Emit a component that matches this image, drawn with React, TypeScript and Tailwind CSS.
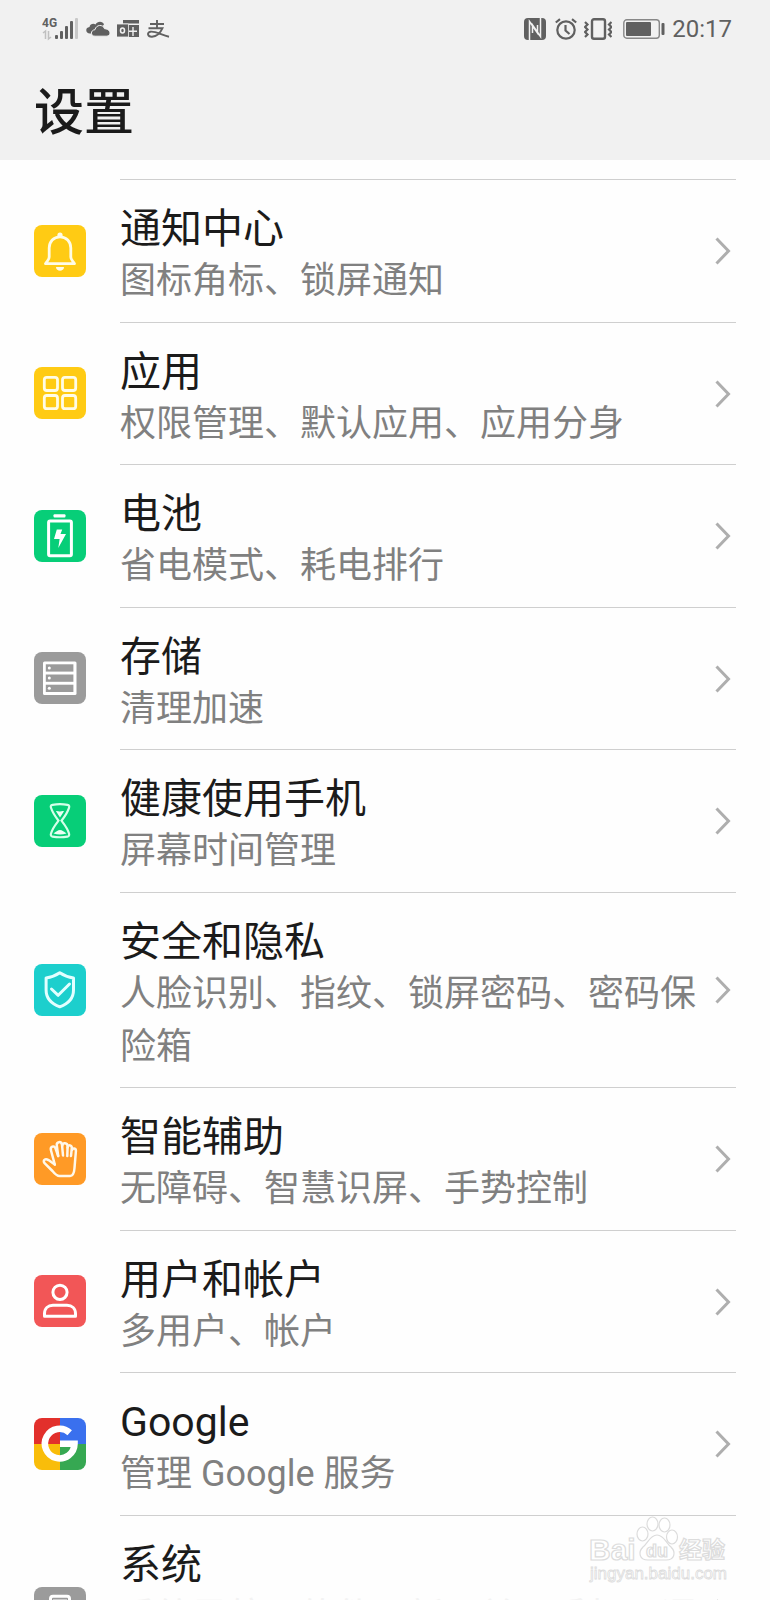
import type { ReactNode } from "react";

interface SettingItem {
  title: string;
  summary: string;
  color: string;
  icon: ReactNode;
  faded?: boolean;
}

const items: SettingItem[] = [
  { title: "通知中心", summary: "图标角标、锁屏通知", color: "bg-[#ffcb14]", icon: <BellIcon /> },
  { title: "应用", summary: "权限管理、默认应用、应用分身", color: "bg-[#ffcb14]", icon: <AppsIcon /> },
  { title: "电池", summary: "省电模式、耗电排行", color: "bg-[#07ce78]", icon: <BatteryIcon /> },
  { title: "存储", summary: "清理加速", color: "bg-[#9b9b9b]", icon: <StorageIcon /> },
  { title: "健康使用手机", summary: "屏幕时间管理", color: "bg-[#07ce78]", icon: <HourglassIcon /> },
  { title: "安全和隐私", summary: "人脸识别、指纹、锁屏密码、密码保险箱", color: "bg-[#1ccfcd]", icon: <ShieldIcon /> },
  { title: "智能辅助", summary: "无障碍、智慧识屏、手势控制", color: "bg-[#ff9a26]", icon: <HandIcon /> },
  { title: "用户和帐户", summary: "多用户、帐户", color: "bg-[#f25657]", icon: <UserIcon /> },
  { title: "Google", summary: "管理 Google 服务", color: "bg-white", icon: <GoogleIcon /> },
  { title: "系统", summary: "系统导航、软件更新、关于手机、语言和输入法", color: "bg-[#9b9b9b]", icon: <PhoneIcon />, faded: true },
];

function BellIcon() {
  return (
    <svg viewBox="0 0 52 52" fill="none" stroke="#fffce6" strokeWidth="2.8" strokeLinejoin="round">
      <path d="M26 11.8c-6.3 0-10.8 4.7-10.8 11.2v9c0 3-2 3.7-3.7 6.7h29c-1.7-3-3.7-3.7-3.7-6.7v-9c0-6.5-4.5-11.2-10.8-11.2z" />
      <circle cx="26" cy="10" r="2.6" fill="#fffce6" stroke="none" />
      <path d="M22 42h8c0 5-8 5-8 0z" fill="#fffce6" stroke="none" />
    </svg>
  );
}

function AppsIcon() {
  return (
    <svg viewBox="0 0 52 52" fill="none" stroke="#fffce6" strokeWidth="2.8">
      <rect x="10.3" y="10.3" width="13.2" height="13.2" rx="2.5" />
      <rect x="28.5" y="10.3" width="13.2" height="13.2" rx="2.5" />
      <rect x="10.3" y="28.5" width="13.2" height="13.2" rx="2.5" />
      <rect x="28.5" y="28.5" width="13.2" height="13.2" rx="2.5" />
    </svg>
  );
}

function BatteryIcon() {
  return (
    <svg viewBox="0 0 52 52" fill="none">
      <rect x="19.5" y="4.2" width="12" height="3.2" rx="1" fill="#fff" />
      <rect x="14.6" y="11" width="22.8" height="34.8" rx="1.5" stroke="#fff" strokeWidth="3" />
      <path d="M22.8 19.5h5.4L26.5 24H32l-7.7 14 1.3-9H20z" fill="#fff" />
    </svg>
  );
}

function StorageIcon() {
  return (
    <svg viewBox="0 0 52 52">
      <rect x="9" y="9.5" width="33.5" height="33.5" rx="1.5" fill="#fff" />
      {[12.3, 22.5, 32.7].map((y) => (
        <g key={y}>
          <rect x="11.8" y={y} width="27.6" height="7.3" fill="#9b9b9b" />
          <circle cx="15.3" cy={y + 3.6} r="1.5" fill="#fff" />
        </g>
      ))}
    </svg>
  );
}

function HourglassIcon() {
  return (
    <svg viewBox="0 0 52 52" fill="none">
      <path
        d="M18.5 9.8c5-.8 10-.8 15 0 1.8.3 2 1.4 1.5 3-1.7 5.5-4.5 9-7.5 12.9 3 3.9 6 7.5 7.5 12.8.5 1.8 0 2.8-1.5 3.1-5 .9-10 .9-15 0-1.5-.3-2-1.3-1.5-3.1 1.5-5.3 4.5-8.9 7.5-12.8-3-3.9-5.8-7.4-7.5-12.9-.5-1.600-.3-2.700 1.500-3z"
        stroke="#d4ffe9"
        strokeWidth="2.2"
      />
      <path d="M22 16.2c1.5-.5 2.5.6 4 .3s2.500-.8 4-.3l-4 6.3zM19.5 38.5c2-1.5 4.5-3.5 6.5-3.5s4.5 2 6.5 3.5c-4 1.2-9 1.2-13 0z" fill="#eafff4" />
    </svg>
  );
}

function ShieldIcon() {
  return (
    <svg viewBox="0 0 52 52" fill="none" stroke="#e2ffff" strokeWidth="3" strokeLinecap="round" strokeLinejoin="round">
      <path d="M25.8 8.8c-4 2.7-8.8 4.5-13.7 5.2v12c0 8.5 5.4 13.8 13.7 16.8 8.3-3 13.7-8.3 13.7-16.8V14c-4.9-.7-9.7-2.5-13.7-5.2z" />
      <path d="M17.5 25l6.7 6.3L35.5 20" />
    </svg>
  );
}

function HandIcon() {
  return (
    <svg viewBox="0 0 52 52" fill="none" stroke="#fff8ea" strokeWidth="2.5" strokeLinecap="round" strokeLinejoin="round">
      <path d="M20.8 31.5L17 17.5c-1.2-4.2 3.3-5.6 4.5-2.2L24.2 23" />
      <path d="M24.2 23l-1.4-10.5c-.5-4 4.6-4.7 5.2-.7L29 22.5" />
      <path d="M28.2 12.8c.5-3.7 5.4-3.2 5.4.5L33.3 23" />
      <path d="M33.6 14.5c1-3.3 4.2-2.5 4.2.5L37 23M37.9 17.5c.7-3 4.3-2.3 4 .7L40.5 35c-.3 4.5-1.5 8-4.5 8H25.5c-3 0-5-2.5-7-5l-7.7-7.7c-2.6-2.7.3-5.3 3.7-3.2l6.3 4.4" />
    </svg>
  );
}

function UserIcon() {
  return (
    <svg viewBox="0 0 52 52" fill="none" stroke="#fff" strokeWidth="3" strokeLinejoin="round">
      <circle cx="26" cy="17.3" r="7.1" />
      <path d="M10.5 41.3v-2.5c0-5.5 3.5-8.5 8.5-8.5h14c5 0 8.5 3 8.5 8.5v2.5z" />
    </svg>
  );
}

function GoogleIcon() {
  return (
    <svg viewBox="0 0 52 52" fill="none">
      <path d="M0 0h26v26H0z" fill="#e2302c" />
      <path d="M26 0h26v26H26z" fill="#3a70ee" />
      <path d="M0 26h26v26H0z" fill="#f9bd0a" />
      <path d="M26 26h26v26H26z" fill="#36a852" />
      <path d="M35.7 14.7A14.8 14.8 0 1 0 40.5 25.8H26" stroke="#fff" strokeWidth="6.6" />
    </svg>
  );
}

function PhoneIcon() {
  return (
    <svg viewBox="0 0 52 52" fill="none" stroke="#fff">
      <rect x="16.5" y="9.3" width="19" height="34" rx="2.5" strokeWidth="3" />
      <path d="M19 13h14" strokeWidth="1" />
    </svg>
  );
}

function Chevron() {
  return (
    <svg viewBox="0 0 16 28" fill="none" stroke="#aeaeae" strokeWidth="3" className="h-7 w-4 shrink-0">
      <path d="M1.5 1.500L13.5 14 1.5 26.5" />
    </svg>
  );
}

function StatusBar() {
  return (
    <div className="flex h-[58px] items-center justify-between pl-[42px] pr-[38px] text-[#606060]">
      <div className="flex items-center gap-[7px]">
        <svg viewBox="0 0 37 24" className="h-6 w-[37px]" fill="currentColor">
          <text x="0" y="10" fontSize="12" fontWeight="700" fontFamily="Roboto, sans-serif">
            4G
          </text>
          <path d="M1 16l2.5-2v8M6.5 14v8l2.5-2" fill="none" stroke="#c0c0c0" strokeWidth="1.5" />
          <rect x="13" y="18" width="3" height="4" rx="1" />
          <rect x="18" y="14" width="3" height="8" rx="1" />
          <rect x="23" y="9" width="3" height="13" rx="1" />
          <rect x="28" y="4" width="3" height="18" rx="1" />
          <rect x="33" y="1" width="3" height="21" rx="1" fill="#c8c8c8" />
        </svg>
        <svg viewBox="0 0 24 16" className="h-4 w-6" fill="currentColor">
          <path d="M5 12.5C-.5 13.5-1.5 6.5 3.5 6c.5-3 4-4 6-2.5 2-4 7.5-3.5 8.5 0L10 12z" />
          <path d="M9 15.2c-4.5 0-5-6 0-6.5C10 3.500 17 3 18.500 7.700c6.500.2 7 7 2.500 7.500z" stroke="#f1f1f1" strokeWidth="1" />
        </svg>
        <svg viewBox="0 0 22 18" className="h-[18px] w-[22px]">
          <path d="M6 0h16v3.5H6zM6 5h16v12H6z" fill="currentColor" />
          <path d="M16 7v9M12 11.2h8" stroke="#f1f1f1" strokeWidth="1.4" />
          <path d="M-.5 4h12v13h-12z" fill="currentColor" stroke="#f1f1f1" strokeWidth=".8" />
          <ellipse cx="5.5" cy="10.5" rx="2" ry="2.5" fill="none" stroke="#f1f1f1" strokeWidth="1.5" />
        </svg>
        <svg viewBox="0 0 24 18" className="h-[18px] w-6" fill="none" stroke="currentColor" strokeWidth="1.9">
          <path d="M4 4h14M11 0v8M2.5 8.2h14c-2 4.5-6 8.3-10.5 8.5-4.5.2-5.500-4.300-1.500-5 5-.8 11 3.500 18.500 5" />
        </svg>
      </div>
      <div className="flex items-center">
        <svg viewBox="0 0 22 22" className="h-[22px] w-[22px]">
          <rect width="22" height="22" rx="4" fill="currentColor" />
          <path d="M5.5 22V3.5L13.5 15V7M16.5 0v18.5L8.5 7v8" fill="none" stroke="#f1f1f1" strokeWidth="1.5" />
        </svg>
        <svg viewBox="0 0 22 22" className="ml-[9px] h-[22px] w-[22px]" fill="none" stroke="currentColor" strokeWidth="2.2">
          <circle cx="11" cy="12" r="8.7" />
          <path d="M10.5 7v5.5l4 3.5M.8 4.5L5 1.2M21.2 4.5L17 1.2" />
        </svg>
        <svg viewBox="0 0 28 22" className="ml-[7px] h-[22px] w-7" fill="none" stroke="currentColor" strokeWidth="2.2">
          <rect x="8" y="1.2" width="13" height="19.6" rx="2" strokeWidth="2.4" />
          <path d="M1 4l2.5 2.5L1 9l2.5 2.5L1 14l2.5 2.5L1 19M27.5 4L25 6.5 27.5 9 25 11.5l2.5 2.5-2.5 2.5 2.5 2.5" />
        </svg>
        <svg viewBox="0 0 42 20" className="ml-[11px] h-5 w-[42px]">
          <rect x=".8" y=".8" width="35.5" height="18.4" rx="3" fill="none" stroke="#888" strokeWidth="1.4" />
          <rect x="3" y="3" width="25" height="14" rx="1" fill="currentColor" />
          <rect x="38.5" y="4" width="3" height="12" rx="1" fill="currentColor" />
        </svg>
        <span className="ml-[7px] text-2xl">20:17</span>
      </div>
    </div>
  );
}

function SettingRow({ title, summary, color, icon, faded }: SettingItem) {
  return (
    <li className="group">
      <a href="#" className="flex items-center gap-[34px] px-[34px]">
        <span className={`h-[52px] w-[52px] shrink-0 overflow-hidden rounded-lg ${color}`}>{icon}</span>
        <span className="flex flex-1 items-center justify-between border-t border-[#cfcfcf] pr-[5px]">
          <span className="block pt-6 pb-[14px] group-even:pb-[13px]">
            <span className="block text-[41px] leading-[51px] text-[#1b1b1b]">{title}</span>
            <span className={`block text-[36px] leading-[53px] ${faded ? "text-[#f3f3f3]" : "text-[#808080]"}`}>{summary}</span>
          </span>
          <Chevron />
        </span>
      </a>
    </li>
  );
}

function Watermark() {
  return (
    <svg viewBox="0 0 150 72" className="absolute right-[35px] bottom-[13px] h-[72px] w-[150px]" fill="#fff" stroke="#dcdcdc" strokeWidth="1.2">
      <text x="4" y="45" fontSize="30" fontWeight="700" fontFamily="Liberation Sans, sans-serif">
        Bai
      </text>
      <ellipse cx="57.5" cy="19" rx="5.5" ry="7" />
      <ellipse cx="67.5" cy="9" rx="5.5" ry="7" />
      <ellipse cx="79.5" cy="10" rx="5.5" ry="7" />
      <ellipse cx="87" cy="22" rx="5.5" ry="7" />
      <path d="M72 20c-7 0-9 8-14 12-5 5-4 13 5 13h18c9 0 10-8 5-13-5-4-7-12-14-12z" />
      <text x="61" y="42" fontSize="18" fontWeight="700" fontFamily="Liberation Sans, sans-serif">
        du
      </text>
      <text x="94" y="43" fontSize="23" fontWeight="700" fontFamily="Noto Sans CJK SC, sans-serif">
        经验
      </text>
      <text x="5" y="64" fontSize="17" fontFamily="Liberation Sans, sans-serif" strokeWidth=".8">
        jingyan.baidu.com
      </text>
    </svg>
  );
}

export default function App() {
  return (
    <div className="relative h-screen overflow-hidden bg-[#fefefe] font-[Roboto,'Noto_Sans_CJK_SC',sans-serif]">
      <header className="bg-[#f1f1f1] pb-3">
        <StatusBar />
        <h1 className="pt-5 pl-[34px] text-[50px] leading-[70px] font-medium text-[#1b1b1b]">设置</h1>
      </header>
      <ul className="pt-[19px]">
        {items.map((item) => (
          <SettingRow key={item.title} {...item} />
        ))}
      </ul>
      <Watermark />
    </div>
  );
}
